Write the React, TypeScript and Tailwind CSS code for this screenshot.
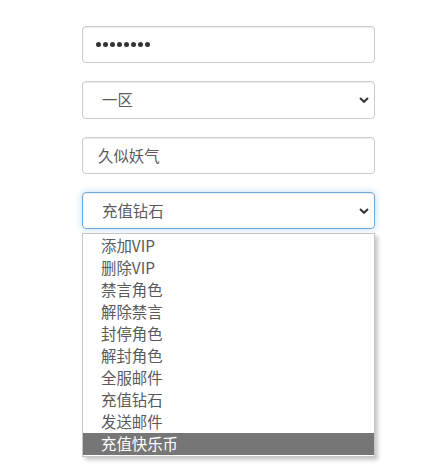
const options = [
  '添加VIP',
  '删除VIP',
  '禁言角色',
  '解除禁言',
  '封停角色',
  '解封角色',
  '全服邮件',
  '充值钻石',
  '发送邮件',
  '充值快乐币',
];

const font = { fontFamily: '"Microsoft YaHei", "Noto Sans CJK SC", "Liberation Sans", sans-serif' };

const Chevron = () => (
  <svg width="10" height="6" viewBox="0 0 10 6" className="shrink-0">
    <path d="M1 1l4 3.8L9 1" fill="none" stroke="#333" strokeWidth="2" />
  </svg>
);

const App = () => {
  return (
    <div className="w-[443px] h-[472px] bg-white overflow-hidden text-[15.4px] text-[#5a5a5a]" style={font}>
      <div className="ml-[82px] w-[293px] pt-[26px] flex flex-col gap-[18px]">
        <div className="h-[37px] border border-[#ccc] rounded-[4px] pl-[13px] flex items-center shadow-[inset_0_1px_1px_rgba(0,0,0,0.075)]">
          <span className="flex gap-[2.5px]">
            {Array.from({ length: 8 }).map((_, i) => (
              <span key={i} className="w-[4.5px] h-[4.5px] rounded-full bg-[#333]" />
            ))}
          </span>
        </div>

        <div className="h-[38px] border border-[#ccc] rounded-[4px] pl-[19px] pr-[5px] flex items-center justify-between shadow-[inset_0_1px_1px_rgba(0,0,0,0.075)]">
          <span>一区</span>
          <Chevron />
        </div>

        <div className="h-[37px] border border-[#ccc] rounded-[4px] pl-[15px] flex items-center shadow-[inset_0_1px_1px_rgba(0,0,0,0.075)]">
          <span>久似妖气</span>
        </div>

        <div className="relative">
          <div className="h-[37px] border border-[#6fa8d6] rounded-[4px] pl-[19px] pr-[5px] flex items-center justify-between shadow-[inset_0_1px_1px_rgba(0,0,0,0.075),0_0_7px_rgba(102,175,233,0.45)]">
            <span>充值钻石</span>
            <Chevron />
          </div>

          <ul className="absolute left-0 top-[41px] w-[293px] bg-white border border-[#c6c6c6] py-[1px] shadow-[3px_3px_4px_rgba(0,0,0,0.22)]">
            {options.map((o, i) => (
              <li
                key={o}
                className={`h-[22px] pl-[18px] flex items-center leading-none ${
                  i === options.length - 1 ? 'bg-[#767676] text-white' : 'text-[#5a5a5a]'
                }`}
              >
                {o}
              </li>
            ))}
          </ul>
        </div>
      </div>
    </div>
  );
};

export default App;
